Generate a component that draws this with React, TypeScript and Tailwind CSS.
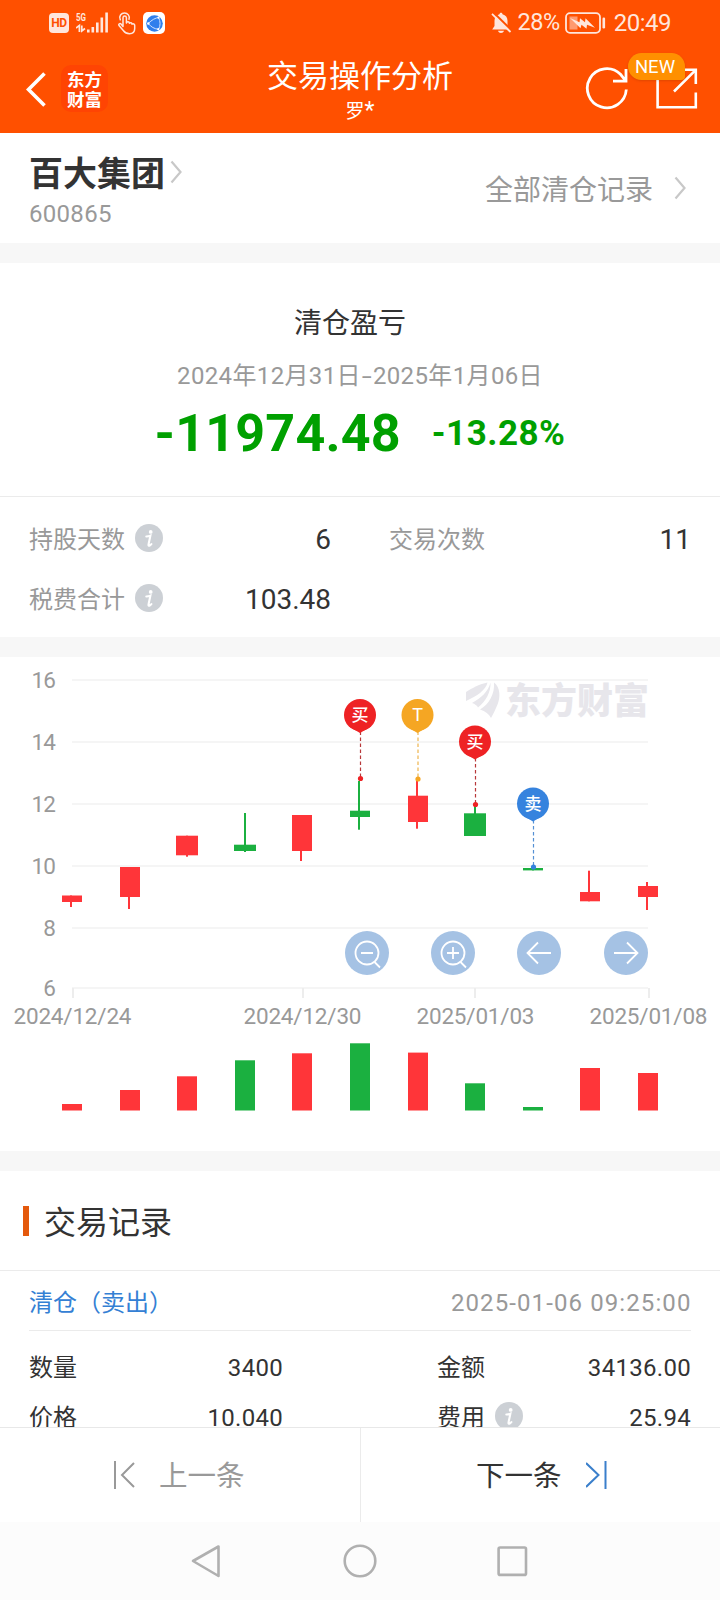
import { clsx } from 'clsx';

const RED = '#ff3539';
const GREEN = '#1bb040';

const FONT = 'font-[Roboto,"Noto_Sans_CJK_SC",sans-serif]';

interface Candle {
  x: number;
  wick: number;
  width: number;
  open: number;
  close: number;
  high: number;
  low: number;
  volumeTop: number;
  up: boolean;
}

// y values are in chart pixels, measured from the top of the chart card
const CANDLES: Candle[] = [
  { x: 62, wick: 71, width: 20, open: 238.5, close: 245, high: 238.5, low: 250, volumeTop: 447, up: true },
  { x: 120, wick: 129, width: 20, open: 210, close: 240, high: 210, low: 252, volumeTop: 433, up: true },
  { x: 176, wick: 187, width: 22, open: 178.7, close: 198.3, high: 178.7, low: 199.7, volumeTop: 419.3, up: true },
  { x: 234, wick: 245, width: 22, open: 187.7, close: 194, high: 156, low: 195, volumeTop: 403.3, up: false },
  { x: 292, wick: 301, width: 20, open: 158, close: 194, high: 158, low: 204, volumeTop: 396.3, up: true },
  { x: 350, wick: 359, width: 20, open: 153.7, close: 160, high: 124, low: 172.7, volumeTop: 386.3, up: false },
  { x: 408, wick: 417, width: 20, open: 138.7, close: 165, high: 124, low: 171.7, volumeTop: 395.6, up: true },
  { x: 464, wick: 475, width: 22, open: 156.3, close: 179, high: 149, low: 179, volumeTop: 426.3, up: false },
  { x: 523, wick: 533, width: 20, open: 211, close: 213.4, high: 211, low: 213.4, volumeTop: 450, up: false },
  { x: 580, wick: 589, width: 20, open: 235, close: 244.3, high: 213.7, low: 244.3, volumeTop: 411, up: true },
  { x: 638, wick: 647, width: 20, open: 229, close: 240, high: 225, low: 253, volumeTop: 416, up: true },
];

const MARKERS = [
  { x: 360, y: 57.5, dot: 121, label: '买', color: '#ee2224', line: '#b8383a' },
  { x: 417.5, y: 57.5, dot: 121.5, label: 'T', color: '#f5a623', line: '#eeb54e' },
  { x: 475, y: 84, dot: 147, label: '买', color: '#ee2224', line: '#b8383a' },
  { x: 533, y: 146, dot: 209.5, label: '卖', color: '#3683de', line: '#5590d4' },
];

const GRID = [
  { y: 23, label: '16' },
  { y: 85, label: '14' },
  { y: 147, label: '12' },
  { y: 209, label: '10' },
  { y: 271, label: '8' },
  { y: 331, label: '6' },
];

const DATES = [
  { x: 72, tick: 73, label: '2024/12/24' },
  { x: 302, tick: 303, label: '2024/12/30' },
  { x: 475, tick: 475, label: '2025/01/03' },
  { x: 648, tick: 649, label: '2025/01/08' },
];

function StatusBar() {
  return (
    <div className="flex h-[46px] items-center justify-between pl-[49px] pr-[49px] text-[#ffe6dc]">
      <div className="flex items-center">
        <span className="flex h-5 w-5 items-center justify-center rounded bg-[#ffe6dc] text-[12px] font-bold leading-none tracking-[-0.3px] text-[#ff5000]">
          HD
        </span>
        <svg className="ml-[7px]" width="33" height="22" viewBox="0 0 33 22" fill="currentColor">
          <text x="0" y="9" fontSize="11.5" fontWeight="700" textLength="10" lengthAdjust="spacingAndGlyphs">5G</text>
          <path d="M0 16l3.400-2.600V20M9 16.500L5.800 19V13.500" fill="none" stroke="currentColor" strokeWidth="1.700" />
          <rect x="11" y="17.500" width="2.600" height="3" />
          <rect x="15.500" y="15" width="2.600" height="5.500" />
          <rect x="20" y="10.500" width="2.600" height="10" />
          <rect x="24.500" y="5.500" width="2.600" height="15" />
          <rect x="29.300" y="0.500" width="2.600" height="20" />
        </svg>
        <svg className="ml-2" width="19" height="23" viewBox="0 0 19 23" fill="none" stroke="currentColor" strokeWidth="1.500" strokeLinecap="round" strokeLinejoin="round">
          <path d="M6 14.500V5.800a1.700 1.700 0 0 1 3.400 0V11c.4-1.600 2.900-1.600 3 .2.800-1 2.600-.6 2.600 1 1-.8 2.700-.3 2.700 1.200v3.200c0 3-2 5.200-5.200 5.200-3 0-4.600-1-6-3L2 13.600c-.9-1.400.9-2.800 2.100-1.500L6 14.500" />
          <path d="M3.300 7.800C1.500 4.200 4.300 1 7.500 1s5.700 3 4.500 6.300" />
        </svg>
        <span className="ml-[7px] flex h-[22px] w-[22px] items-center justify-center rounded-[5px] bg-white">
          <svg width="17" height="17" viewBox="0 0 17 17">
            <circle cx="8.500" cy="8.500" r="8.300" fill="#2f7fec" />
            <path d="M2.200 8.500C6 4.800 9 3 13 2.400M2.200 8.500c3 3.600 6 5.200 10 5.800M12.500 2.500c2 4 2 8 0 12" fill="none" stroke="#cfe3ff" strokeWidth="1" />
            <circle cx="2.300" cy="8.500" r="1.200" fill="#fff" />
            <circle cx="12.500" cy="2.700" r="1.100" fill="#fff" />
            <circle cx="12.300" cy="14.200" r="1.100" fill="#fff" />
          </svg>
        </span>
      </div>
      <div className="flex items-center text-[24px] leading-none">
        <svg width="21" height="22" viewBox="0 0 21 22" fill="currentColor">
          <path d="M10 .8c.9 0 1.500.6 1.500 1.500 3.200.8 5 3.200 5 6.400V14L19 17.600H1.200L3.500 14V8.700c0-3.200 1.800-5.600 5-6.400 0-.9.600-1.500 1.500-1.500zM7 18.800h6c-.5 1.500-1.600 2.200-3 2.200s-2.500-.7-3-2.200z" />
          <path d="M2.500 0.500L21 18.700" stroke="#ff5000" strokeWidth="2" />
          <path d="M1 1.800L19.500 20" stroke="currentColor" strokeWidth="1.800" />
        </svg>
        <span className="ml-[6px] text-[23.500px] tracking-[-0.500px]">28%</span>
        <svg className="ml-[5px]" width="41" height="22" viewBox="0 0 41 22" fill="none">
          <rect x="1" y="1.200" width="34" height="19.600" rx="4" stroke="currentColor" strokeWidth="1.800" />
          <rect x="4.500" y="4.500" width="8" height="13" fill="#ff9a70" />
          <path d="M5 6l9.500 4.200.5-4 5 4 .5-4 9.500 9.500-8-3-.5 4-5-4-1 3.500z" fill="currentColor" />
          <rect x="37.500" y="5.500" width="2.600" height="11" rx="1.200" fill="currentColor" />
        </svg>
        <span className="ml-[8px] tracking-[-0.500px]">20:49</span>
      </div>
    </div>
  );
}

function Header() {
  return (
    <header className="h-[133px] bg-[#ff5000] text-white">
      <StatusBar />
      <div className="flex h-[87px] justify-between">
        <div className="flex w-[200px] items-start pl-[26px] pt-[19px]">
          <svg className="mt-[7px]" width="20" height="35" viewBox="0 0 20 35" fill="none" stroke="currentColor" strokeWidth="3.600">
            <path d="M18.500 1.500L2.500 17.500l16 16" />
          </svg>
          <div className='ml-[15px] flex h-[47px] w-[47px] items-center justify-center rounded-[10px] bg-[#ff4403] font-["Noto_Sans_CJK_SC",sans-serif] text-[17.500px] font-bold leading-[19.500px]'>
            <span className="w-[35px]">东方财富</span>
          </div>
        </div>
        <div className="flex flex-col items-center pt-[13px]">
          <h1 className="text-[31px] leading-9">交易操作分析</h1>
          <p className="mt-[4px] text-[19px] leading-6">罗<span className="text-[23px] leading-none">*</span></p>
        </div>
        <div className="flex w-[200px] items-start justify-end pr-[22px] pt-[20px]">
          <svg width="44" height="44" viewBox="0 0 44 44" fill="none" stroke="currentColor" strokeWidth="2.800">
            <path d="M41.300 23.500A19.500 19.500 0 1 1 35.500 8.300L40 14M41 3v12.200H28" />
          </svg>
          <div className="relative ml-[27px]">
            <svg width="42" height="44" viewBox="0 0 42 44" fill="none" stroke="currentColor" strokeWidth="2.600">
              <path d="M1.600 8v33.200h38.200V26.500M27 3.800h12.800V18M39.300 4.300L18 25.500" />
            </svg>
            <span className="absolute -left-[28px] -top-[13px] flex h-[27px] w-[57px] items-center justify-center rounded-[14px] rounded-br-[4px] bg-[#ff9000] pr-[3px] pt-px text-[18.500px] leading-none shadow-sm">
              NEW
            </span>
          </div>
        </div>
      </div>
    </header>
  );
}

function Chevron() {
  return (
    <svg width="13" height="24" viewBox="0 0 13 24" fill="none" stroke="#c8c8c8" strokeWidth="2.200">
      <path d="M1.500 1.500L10.500 12 1.500 22.500" />
    </svg>
  );
}

function InfoIcon() {
  return (
    <svg className="-mt-[5px] ml-[10px]" width="28" height="28" viewBox="0 0 28 28">
      <circle cx="14" cy="14" r="14" fill="#ccd0d5" />
      <circle cx="15.700" cy="7.900" r="1.900" fill="#fff" />
      <path d="M11.300 12.500c1.500 0 3-.4 4.100-.9-.6 3.600-1.700 7.200-1.900 9.300 0 1.500 1.500.8 2.900-.8" fill="none" stroke="#fff" strokeWidth="2.100" strokeLinecap="round" />
    </svg>
  );
}

function StockSection() {
  return (
    <section className="flex h-[110px] justify-between pl-[29px] pr-[33px]">
      <div className="pt-[20px]">
        <div className="flex items-center">
          <h2 className="text-[34px] font-bold leading-[42px] text-[#333]">百大集团</h2>
          <span className="ml-[5px] mt-[-5px]"><Chevron /></span>
        </div>
        <p className="mt-[5px] text-[24px] leading-7 tracking-[0.300px] text-[#999]">600865</p>
      </div>
      <div className="flex items-center text-[28px] text-[#999]">
        <span className="mt-[6px]">全部清仓记录</span>
        <span className="ml-[21px]"><Chevron /></span>
      </div>
    </section>
  );
}

function ProfitSection() {
  return (
    <section className="flex h-[233px] flex-col items-center">
      <h3 className="mr-[20px] mt-[43px] text-[28px] leading-9 text-[#333]">清仓盈亏</h3>
      <p className="mt-[18px] flex items-center text-[24px] leading-8 tracking-[0.360px] text-[#999]">
        2024年12月31日
        <span className="inline-block w-[12px] scale-x-150 text-center">-</span>
        2025年1月06日
      </p>
      <div className="mt-[12px] flex items-center font-bold leading-[60px] text-[#00a000]">
        <span className="text-[52px] tracking-[0.200px]">-11974.48</span>
        <span className="ml-[31px] text-[35px] tracking-[0.500px]">-13.28%</span>
      </div>
    </section>
  );
}

function Stat({ label, value, info, className }: { label: string; value: string; info?: boolean; className?: string }) {
  return (
    <div className={clsx('flex h-[60px] items-center justify-between', className)}>
      <span className="flex items-center text-[24px] text-[#999]">
        {label}
        {info && <InfoIcon />}
      </span>
      <span className="text-[28px] text-[#333]">{value}</span>
    </div>
  );
}

function StatsSection() {
  return (
    <section className="grid h-[141px] grid-cols-2 content-start border-t border-[#ebebeb] pt-[13px]">
      <Stat label="持股天数" value="6" info className="pl-[29px] pr-[29px]" />
      <Stat label="交易次数" value="11" className="pl-[29px] pr-[29px]" />
      <Stat label="税费合计" value="103.48" info className="pl-[29px] pr-[29px]" />
    </section>
  );
}

function ChartButton({ x, children }: { x: number; children: React.ReactNode }) {
  return (
    <g transform={`translate(${x} 296)`} fill="none" stroke="#fff" strokeWidth="1.800">
      <circle r="22" fill="#a5c2e4" stroke="none" />
      {children}
    </g>
  );
}

function PriceChart() {
  return (
    <svg className="block" width="720" height="494" viewBox="0 0 720 494">
      <g fontSize="22.500" fill="#999">
        {GRID.map(({ y, label }) => (
          <g key={label}>
            <rect x="72" y={y - 1} width="576" height="2" fill="#f5f5f5" />
            <text x="56" y={y + 7.500} textAnchor="end" textLength={label.length > 1 ? 24.5 : undefined}>{label}</text>
          </g>
        ))}
        {DATES.map(({ x, tick, label }) => (
          <g key={label}>
            <rect x={tick - 1} y="331" width="2" height="10" fill="#ededed" />
            <text x={x + 0.500} y="367" textAnchor="middle" textLength="118">{label}</text>
          </g>
        ))}
      </g>

      {/* Brand watermark */}
      <g fill="#e7e6eb">
        <path d="M466 35c6-4 14-8 21.500-9.500C486 33 477 39 466 44z" />
        <path d="M490.500 25.500C491 35 486 44 478 50.500c-1-2-3-3.500-6-4.500 9-5 16-11 18.500-20.500z" />
        <path d="M494 25.500c6.500 5 6.500 15 3.500 22-2 5-4 9-6.500 13.500-2-4-5.500-6.500-11-8.500 9-5 15-16 14-27z" />
        <text x="505" y="56.500" fontSize="36" fontWeight="900" textLength="144">东方财富</text>
      </g>

      {CANDLES.map((c) => {
        const color = c.up ? RED : GREEN;
        return (
          <g key={c.x} fill={color}>
            <rect x={c.wick - 1} y={c.high} width="2" height={c.low - c.high} />
            <rect x={c.x} y={c.open} width={c.width} height={c.close - c.open} />
            <rect x={c.x + (c.width - 20) / 2} y={c.volumeTop} width="20" height={453.5 - c.volumeTop} />
          </g>
        );
      })}

      {MARKERS.map((m) => (
        <g key={m.x}>
          <path d={`M${m.x + 0.5} ${m.y + 17}V${m.dot}`} stroke={m.line} strokeWidth="1.200" strokeDasharray="3.500 2.500" />
          <circle cx={m.x + 0.5} cy={m.dot + 0.5} r="2.600" fill={m.color} />
          <circle cx={m.x} cy={m.y + 0.5} r="16" fill={m.color} />
          <path d={`M${m.x - 11} ${m.y + 12}L${m.x} ${m.y + 18.5}l11-6.500z`} fill={m.color} />
          <text x={m.x} y={m.y + 6.5} fontSize={m.label === 'T' ? 18 : 17} fontWeight={m.label === 'T' ? 400 : 500} fill="#fff" textAnchor="middle">
            {m.label}
          </text>
        </g>
      ))}

      <ChartButton x={367}>
        <circle r="11.500" />
        <path d="M-6 0H6M7.500 9l5.500 5.500" />
      </ChartButton>
      <ChartButton x={453}>
        <circle r="11.500" />
        <path d="M-6 0H6M0-6V6M7.500 9l5.500 5.500" />
      </ChartButton>
      <ChartButton x={539}>
        <path d="M12 0h-23.500M-1-10.500L-11.500 0-1 10.500" />
      </ChartButton>
      <ChartButton x={626}>
        <path d="M-12 0h23.500M1-10.500L11.500 0 1 10.500" />
      </ChartButton>
    </svg>
  );
}

function RecordCell({ label, value, info }: { label: string; value: string; info?: boolean }) {
  return (
    <div className="flex h-[50px] items-center justify-between">
      <span className="flex items-center">
        {label}
        {info && <InfoIcon />}
      </span>
      <span className="tracking-[0.300px]">{value}</span>
    </div>
  );
}

function TradeRecords() {
  return (
    <section className="h-[256px] overflow-hidden">
      <div className="flex h-[99px] items-center pl-[23px]">
        <span className="h-[30px] w-[6px] bg-[#e4590c]" />
        <h3 className="ml-[15px] mt-[4px] text-[32px] leading-none text-[#333]">交易记录</h3>
      </div>
      <div className="border-t border-[#ebebeb] px-[29px]">
        <div className="flex h-[60px] items-center justify-between border-b border-[#ebebeb] pt-[4px]">
          <span className="text-[24px] text-[#3480d4]">清仓（卖出）</span>
          <span className="-mr-[0.500px] text-[24px] tracking-[1.100px] text-[#999]">2025-01-06 09:25:00</span>
        </div>
        <div className="grid grid-cols-[254px_1fr] gap-x-[154px] pt-[12px] text-[24px] text-[#333]">
          <RecordCell label="数量" value="3400" />
          <RecordCell label="金额" value="34136.00" />
          <RecordCell label="价格" value="10.040" />
          <RecordCell label="费用" value="25.94" info />
        </div>
      </div>
    </section>
  );
}

function Pager() {
  return (
    <div className="flex h-[95px] border-t border-[#e8e8e8] bg-white text-[28.500px]">
      <button className="flex w-[361px] items-center border-r border-[#ebebeb] pl-[113px] text-[#999]">
        <svg width="22" height="28" viewBox="0 0 22 28" fill="none" stroke="currentColor" strokeWidth="2">
          <path d="M2 0v28M21 2L9 14l12 12" />
        </svg>
        <span className="ml-6 mt-[5px]">上一条</span>
      </button>
      <button className="flex w-[359px] items-center pl-[115px] text-[#333]">
        <span className="mt-[5px]">下一条</span>
        <svg className="ml-6" width="22" height="28" viewBox="0 0 22 28" fill="none" stroke="#3a7fcb" strokeWidth="2">
          <path d="M19.500 0v28M0 2l12.500 12L0 26" />
        </svg>
      </button>
    </div>
  );
}

function SystemNav() {
  return (
    <nav className="flex h-[78px] items-center bg-[#fcfcfc] pl-[189px]">
      <svg width="34" height="34" viewBox="0 0 34 34" fill="none" stroke="#b0b0b0" strokeWidth="2.600" strokeLinejoin="round">
        <path d="M29.500 2.500v29.500L4 17z" />
      </svg>
      <svg className="ml-[120px]" width="34" height="34" viewBox="0 0 34 34" fill="none" stroke="#b0b0b0" strokeWidth="2.600">
        <circle cx="17" cy="17" r="15.300" />
      </svg>
      <svg className="ml-[118px]" width="34" height="34" viewBox="0 0 34 34" fill="none" stroke="#b0b0b0" strokeWidth="2.600">
        <rect x="3.600" y="3.500" width="27.400" height="27.400" rx="1.500" />
      </svg>
    </nav>
  );
}

function Gap() {
  return <div className="h-5 bg-[#f7f7f7]" />;
}

export default function App() {
  return (
    <main className={clsx('h-[1600px] w-[720px] overflow-hidden bg-white', FONT)}>
      <Header />
      <StockSection />
      <Gap />
      <ProfitSection />
      <StatsSection />
      <Gap />
      <PriceChart />
      <Gap />
      <TradeRecords />
      <Pager />
      <SystemNav />
    </main>
  );
}
